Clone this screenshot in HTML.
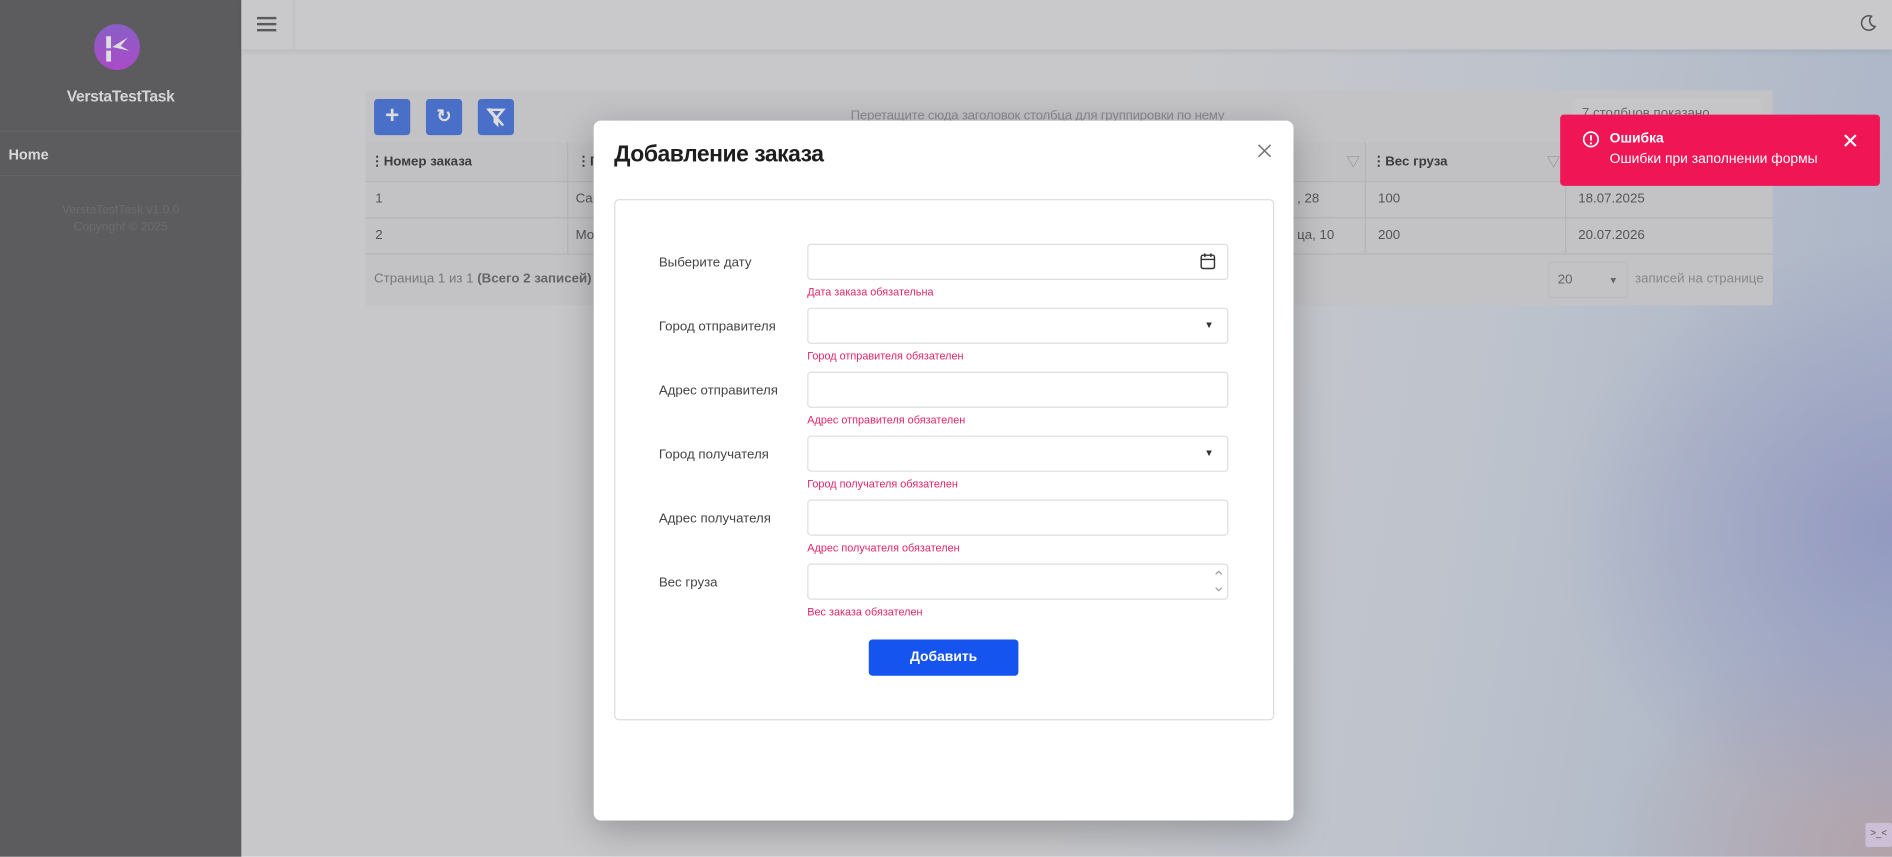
<!DOCTYPE html>
<html><head><meta charset="utf-8"><style>
*{box-sizing:border-box;margin:0;padding:0}
html,body{width:1892px;height:857px;overflow:hidden;font-family:"Liberation Sans","Noto Sans CJK SC",sans-serif}
#s{position:absolute;left:0;top:0;width:1568px;height:710px;transform:scale(1.20663);transform-origin:0 0;
background:radial-gradient(ellipse 280px 240px at 1568px 440px,rgba(143,149,192,.85) 0%,rgba(143,147,194,0) 100%),radial-gradient(ellipse 240px 200px at 1568px 710px,rgba(180,160,166,.9) 0%,rgba(184,160,164,0) 100%),linear-gradient(100deg,#c8c8cb 0%,#c8c8cb 58%,#bcc2cc 78%,#a8b3c6 100%);}
.a{position:absolute}
.sb{left:0;top:0;width:200px;height:710px;background:#5c5c5f}
.top{left:200px;top:0;width:1368px;height:41px;background:#c9c9cc;box-shadow:0 2px 4px rgba(0,0,0,.08)}
.grid{left:303px;top:75px;width:1166px;height:178px;background:#c3c3c6}
.btn{width:30px;height:30px;background:#4a6fc8;border-radius:3px;color:#ddd;text-align:center;font-weight:bold}
.th{top:118px;height:32px;font-size:11px;font-weight:bold;color:#3c3c3e;line-height:32px;background:#c1c1c4}
.td{font-size:11px;color:#555;line-height:30px}
.hl{height:1px;background:#b5b5b8;left:303px;width:1166px}
.modal{left:492px;top:100px;width:580px;height:580px;background:#fff;border-radius:6px;box-shadow:0 8px 30px rgba(0,0,0,.25)}
.lbl{left:546px;font-size:11px;color:#444}
.inp{left:669px;width:349px;height:30px;border:1px solid #dedede;border-radius:3px;background:#fff}
.err{left:669px;font-size:9px;color:#e0246a}
</style></head><body><div id="s">
<div class="a sb"></div>
<svg class="a" style="left:78px;top:20px" width="38" height="38" viewBox="0 0 38 38"><defs><linearGradient id="g" x1="0" y1="0" x2="0" y2="1"><stop offset="0" stop-color="#8a5fc6"/><stop offset="1" stop-color="#a94bc7"/></linearGradient></defs><ellipse cx="19" cy="19" rx="19" ry="19" fill="url(#g)"/><rect x="10" y="10" width="4" height="21" fill="#ddd"/><rect x="10" y="20" width="4" height="2" fill="#9a55c6"/><path d="M15 19 L28 11 L22 18 L29 22 Z" fill="#ddd"/></svg>
<div class="a" style="left:0;width:200px;top:72px;text-align:center;color:#d4d4d6;font-weight:bold;font-size:13px;letter-spacing:-.3px">VerstaTestTask</div>
<div class="a" style="left:0;top:108px;width:200px;height:1px;background:#666669"></div>
<div class="a" style="left:7px;top:121px;color:#d8d8da;font-weight:bold;font-size:12px">Home</div>
<div class="a" style="left:0;top:145px;width:200px;height:1px;background:#666669"></div>
<div class="a" style="left:0;width:200px;top:168px;text-align:center;color:#6c6c6f;font-size:10px;line-height:14px">VerstaTestTask v1.0.0<br>Copyright © 2025</div>
<div class="a top"></div>
<div class="a" style="left:213px;top:14px;width:16px;height:2px;background:#5a5a5c;box-shadow:0 5px 0 #5a5a5c,0 10px 0 #5a5a5c"></div>
<div class="a" style="left:243px;top:0;width:1px;height:41px;background:#bdbdc0"></div>
<svg class="a" style="left:1540px;top:11px" width="16" height="16" viewBox="0 0 16 16"><path d="M11 2.5A6 6 0 1 0 14 11 5 5 0 0 1 11 2.5Z" fill="none" stroke="#555" stroke-width="1.3"/></svg>
<div class="a grid"></div>
<div class="a btn" style="left:310px;top:82px;font-size:20px;line-height:28px">+</div>
<div class="a btn" style="left:353px;top:82px;font-size:15px;line-height:30px">&#x21bb;</div>
<div class="a btn" style="left:396px;top:82px"><svg width="30" height="30" viewBox="0 0 30 30"><path d="M9 9h12l-5 6v6l-2-2v-4z" fill="none" stroke="#ddd" stroke-width="2"/><path d="M9 8l12 14" stroke="#ddd" stroke-width="2"/></svg></div>
<div class="a" style="left:705px;top:90px;font-size:11px;color:#8a8a8d;letter-spacing:-.2px">Перетащите сюда заголовок столбца для группировки по нему</div>
<div class="a" style="left:1303px;top:82px;width:157px;height:30px;background:#c6c6c9;border-radius:3px;font-size:11px;color:#666;padding:6px 8px">7 столбцов показано</div>
<div class="a th" style="left:303px;width:1166px"></div>
<div class="a th" style="left:307px">⋮Номер заказа</div>
<div class="a th" style="left:478px">⋮Го</div>
<div class="a th" style="left:1137px">⋮Вес груза</div>
<div class="a" style="left:470px;top:118px;width:1px;height:92px;background:#b5b5b8"></div>
<div class="a" style="left:1131px;top:118px;width:1px;height:92px;background:#b5b5b8"></div>
<div class="a" style="left:1297px;top:118px;width:1px;height:92px;background:#b5b5b8"></div>
<div class="a" style="left:1116px;top:126px;font-size:11px;color:#888">&#x25BD;</div>
<div class="a" style="left:1282px;top:126px;font-size:11px;color:#888">&#x25BD;</div>
<div class="a hl" style="top:150px"></div><div class="a hl" style="top:180px"></div><div class="a hl" style="top:210px"></div>
<div class="a td" style="left:311px;top:150px">1</div><div class="a td" style="left:477px;top:150px">Сан</div><div class="a td" style="left:1075px;top:150px">, 28</div><div class="a td" style="left:1142px;top:150px">100</div><div class="a td" style="left:1308px;top:150px">18.07.2025</div>
<div class="a td" style="left:311px;top:180px">2</div><div class="a td" style="left:477px;top:180px">Мо</div><div class="a td" style="left:1075px;top:180px">ца, 10</div><div class="a td" style="left:1142px;top:180px">200</div><div class="a td" style="left:1308px;top:180px">20.07.2026</div>
<div class="a" style="left:310px;top:225px;font-size:11px;color:#777">Страница 1 из 1 <b style="color:#666">(Всего 2 записей)</b></div>
<div class="a" style="left:1283px;top:217px;width:66px;height:30px;border:1px solid #bcbcbf;border-radius:3px;font-size:11px;color:#666;padding:8px 7px">20 <span style="float:right;font-size:8px;margin-top:2px">&#x25BC;</span></div>
<div class="a" style="left:1355px;top:225px;font-size:11px;color:#888">записей на странице</div>
<div class="a modal"></div>
<div class="a" style="left:509px;top:118px;font-size:19px;font-weight:bold;color:#1e1e1e;letter-spacing:-.4px">Добавление заказа</div>
<svg class="a" style="left:1042px;top:119px" width="12" height="12"><path d="M1 1L11 11M11 1L1 11" stroke="#777" stroke-width="1.3"/></svg>
<div class="a" style="left:509px;top:165px;width:547px;height:432px;border:1px solid #dcdcdc;border-radius:4px"></div>
<div class="a lbl" style="top:212px">Выберите дату</div>
<div class="a inp" style="top:202px"></div>
<svg class="a" style="left:994px;top:209px" width="14" height="15" viewBox="0 0 14 15"><rect x="1.5" y="2.5" width="11" height="11" rx="1.5" fill="none" stroke="#333" stroke-width="1.2"/><path d="M1.5 6h11M4.5 1v3M9.5 1v3" stroke="#333" stroke-width="1.2"/></svg>
<div class="a err" style="top:237px">Дата заказа обязательна</div>
<div class="a lbl" style="top:265px">Город отправителя</div>
<div class="a inp" style="top:255px"></div><div class="a" style="left:998px;top:265px;font-size:8px;color:#333">&#x25BC;</div>
<div class="a err" style="top:290px">Город отправителя обязателен</div>
<div class="a lbl" style="top:318px">Адрес отправителя</div>
<div class="a inp" style="top:308px"></div>
<div class="a err" style="top:343px">Адрес отправителя обязателен</div>
<div class="a lbl" style="top:371px">Город получателя</div>
<div class="a inp" style="top:361px"></div><div class="a" style="left:998px;top:371px;font-size:8px;color:#333">&#x25BC;</div>
<div class="a err" style="top:396px">Город получателя обязателен</div>
<div class="a lbl" style="top:424px">Адрес получателя</div>
<div class="a inp" style="top:414px"></div>
<div class="a err" style="top:449px">Адрес получателя обязателен</div>
<div class="a lbl" style="top:477px">Вес груза</div>
<div class="a inp" style="top:467px"></div>
<svg class="a" style="left:1006px;top:471px" width="8" height="22"><path d="M1.5 5L4 2.5 6.5 5M1.5 16L4 18.5 6.5 16" fill="none" stroke="#999" stroke-width="1"/></svg>
<div class="a err" style="top:502px">Вес заказа обязателен</div>
<div class="a" style="left:720px;top:530px;width:124px;height:30px;background:#1654ef;border-radius:3px;color:#fff;font-weight:bold;font-size:11.5px;text-align:center;line-height:30px">Добавить</div>
<div class="a" style="left:1293px;top:95px;width:265px;height:59px;background:#f01555;border-radius:3px"></div>
<svg class="a" style="left:1311px;top:108px" width="15" height="15"><circle cx="7.5" cy="7.5" r="6" fill="none" stroke="#fff" stroke-width="1.4"/><path d="M7.5 4v4.5" stroke="#fff" stroke-width="1.5"/><circle cx="7.5" cy="10.8" r=".9" fill="#fff"/></svg>
<div class="a" style="left:1334px;top:109px;color:#fff;font-weight:bold;font-size:11.5px">Ошибка</div>
<div class="a" style="left:1334px;top:126px;color:#fff;font-size:11.5px">Ошибки при заполнении формы</div>
<svg class="a" style="left:1528px;top:111px" width="11" height="11"><path d="M1 1L10 10M10 1L1 10" stroke="#fff" stroke-width="1.8"/></svg>
<div class="a" style="left:1546px;top:682px;width:22px;height:20px;background:#cdbfd6;border-radius:2px;font-size:8px;color:#555;text-align:center;line-height:18px">&gt;_&lt;</div>
</div></body></html>
